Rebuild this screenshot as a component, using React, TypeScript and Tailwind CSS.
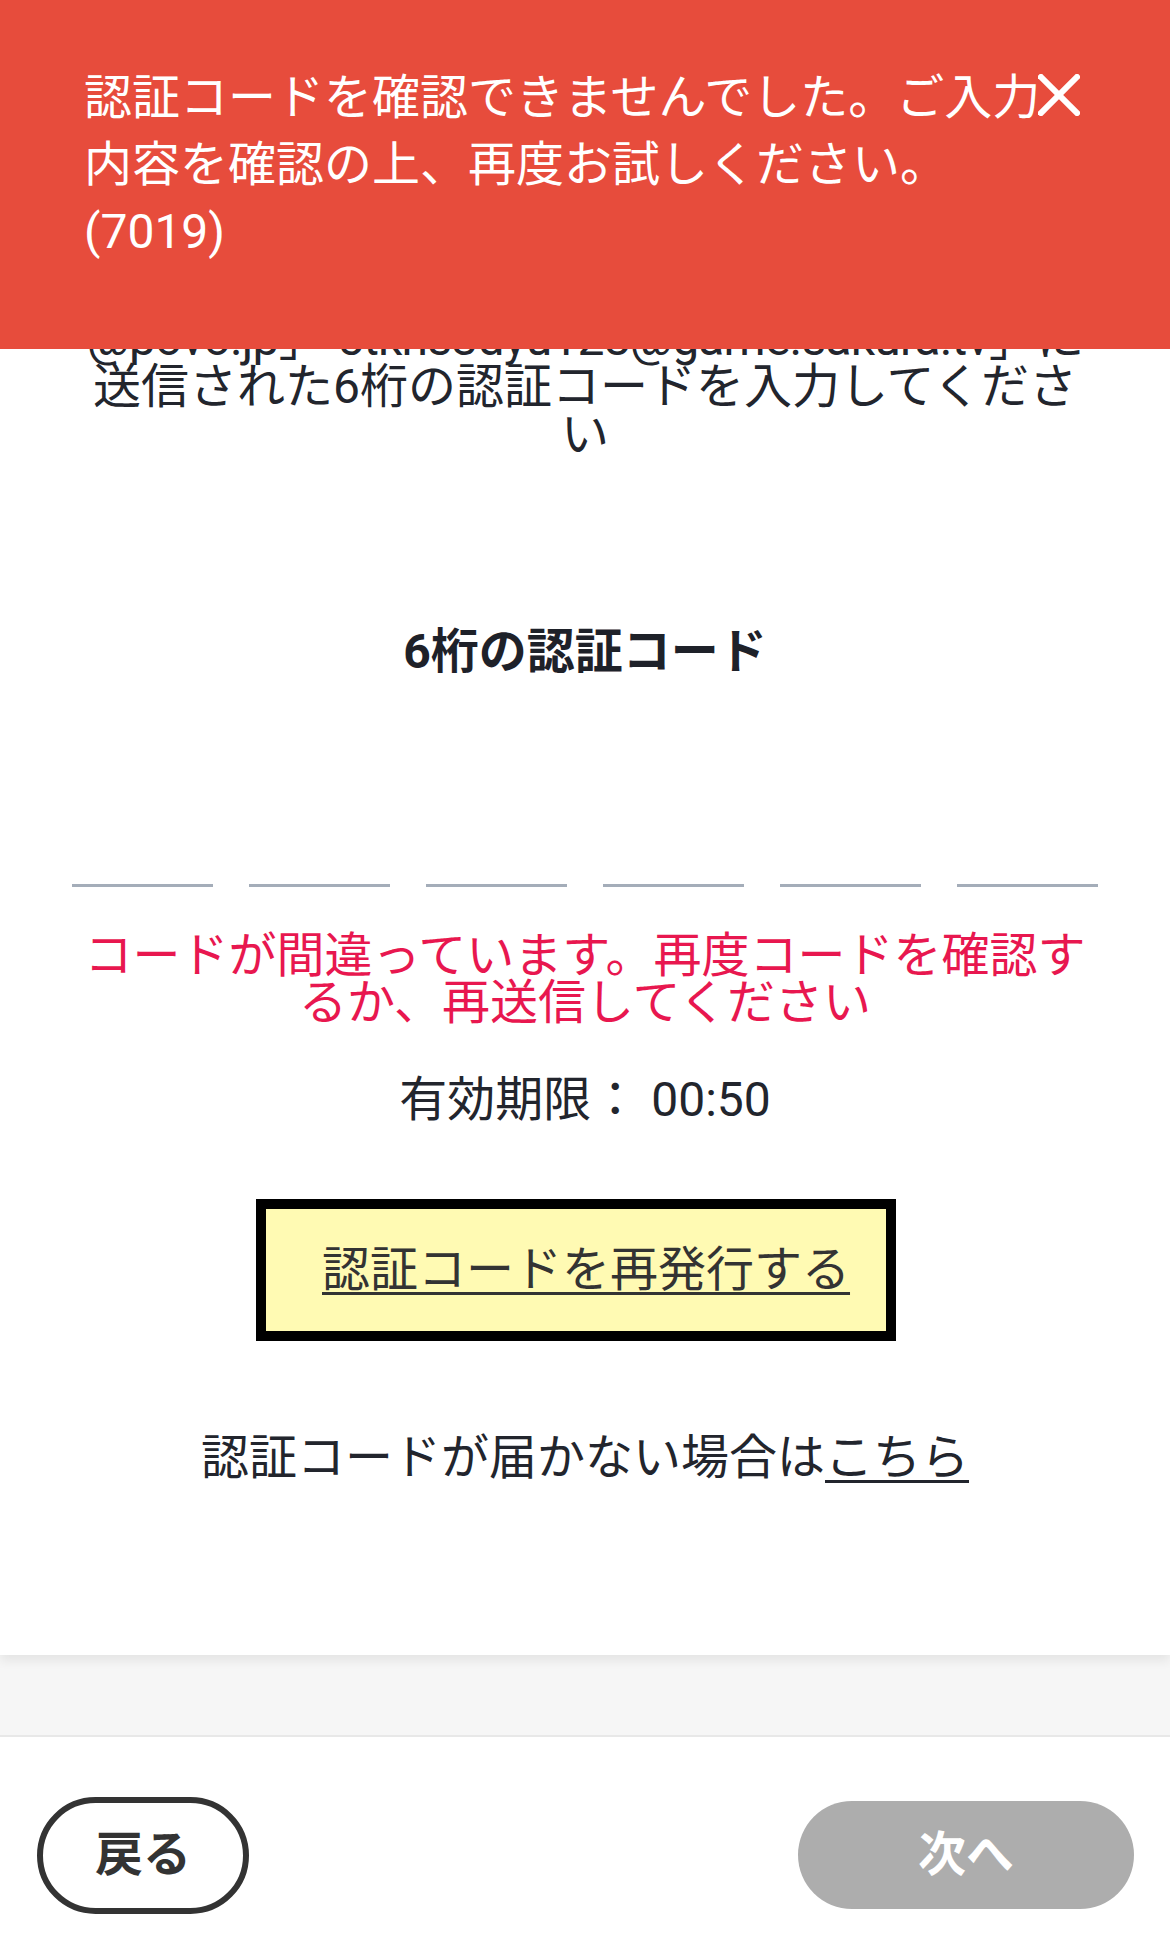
import React from "react";

export default function App() {
  return (
    <div className="relative w-[1170px] h-[1954px] bg-white flex flex-col overflow-hidden [font-family:Roboto,'Noto_Sans_CJK_JP',sans-serif]">
      <main className="relative z-10 h-[1655px] shrink-0 bg-white shadow-[0_6px_10px_rgba(0,0,0,0.07)] flex flex-col items-center px-[72px] pt-[315px]">
        <p className="w-full text-center text-[48px] leading-[48px] text-[#22252d]">
          <span className="block whitespace-nowrap tracking-[-0.8px]">@povo.jp」 5tkns3dyu128@game.sakura.tv」に</span>
          送信された6桁の認証コードを入力してください
        </p>
        <h2 className="mt-[169px] text-[48px] leading-[48px] font-bold text-[#1e2129]">6桁の認証コード</h2>
        <div className="mt-[88px] grid w-full grid-cols-6 gap-[36px]">
          {[0, 1, 2, 3, 4, 5].map((i) => (
            <div key={i} className="h-[123px] border-b-[3px] border-[#a4adb9]" />
          ))}
        </div>
        <p className="mt-[45px] w-full text-center text-[48px] leading-[47px] text-[#e8174f]">
          コードが間違っています。再度コードを確認するか、再送信してください
        </p>
        <p className="mt-[50px] text-[48px] leading-[48px] text-[#22252d]">有効期限： 00:50</p>
        <div className="mt-[75px] self-start ml-[184px] flex h-[142px] w-[640px] items-center border-[10px] border-black bg-[#fffab3] pl-[56px]">
          <span className="text-[48px] leading-[48px] text-[#333333] underline underline-offset-[6px] decoration-[3px]">
            認証コードを再発行する
          </span>
        </div>
        <p className="mt-[93px] text-[48px] leading-[48px] text-[#22252d]">
          認証コードが届かない場合は
          <span className="underline underline-offset-[6px] decoration-[3px]">こちら</span>
        </p>
      </main>
      <div className="h-[82px] shrink-0 bg-[#f6f6f6] border-b-2 border-[#e8e8e8]" />
      <footer className="flex flex-1 items-center justify-between bg-white pl-[37px] pr-[36px] pt-[19px]">
        <button className="flex h-[117px] w-[212px] items-center justify-center rounded-full border-[6px] border-[#333333] bg-white text-[48px] font-bold text-[#333333]">
          戻る
        </button>
        <button className="flex h-[108px] w-[336px] items-center justify-center rounded-full bg-[#adadad] text-[48px] font-bold text-white">
          次へ
        </button>
      </footer>

      <div className="absolute left-0 top-0 z-20 h-[349px] w-full bg-[#e74c3c] pl-[84px] pt-[64px]">
        <p className="w-[964px] text-[48px] leading-[67px] text-white">
          認証コードを確認できませんでした。ご入力内容を確認の上、再度お試しください。(7019)
        </p>
        <button className="absolute left-[1038px] top-[74px] h-[42px] w-[42px]" aria-label="close">
          <svg viewBox="0 0 42 42" width="42" height="42">
            <line x1="3" y1="3" x2="39" y2="39" stroke="white" strokeWidth="6" strokeLinecap="square" />
            <line x1="39" y1="3" x2="3" y2="39" stroke="white" strokeWidth="6" strokeLinecap="square" />
          </svg>
        </button>
      </div>
    </div>
  );
}
